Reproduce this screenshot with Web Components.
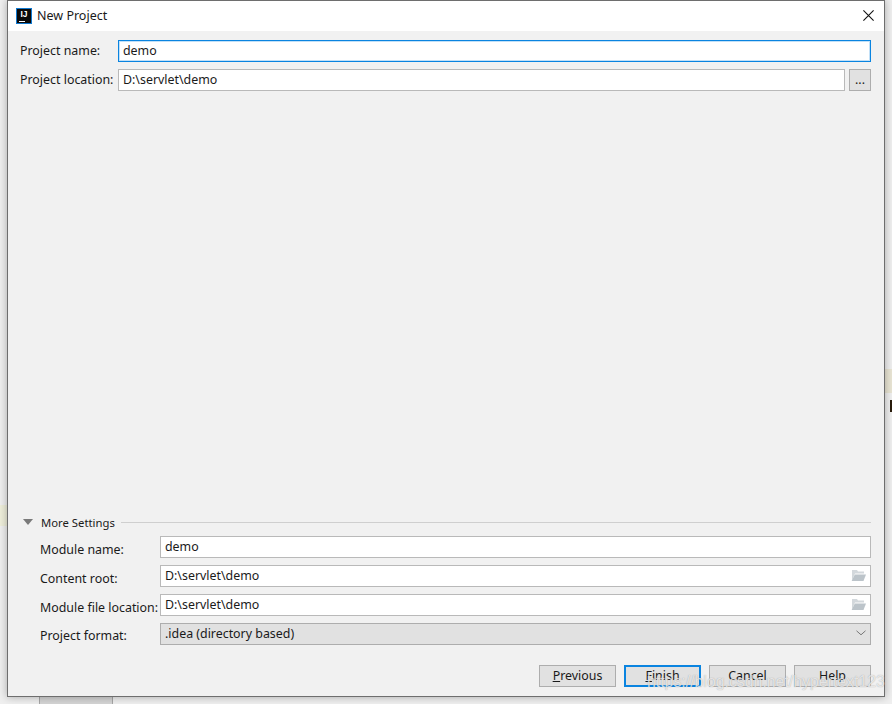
<!DOCTYPE html>
<html>
<head>
<meta charset="utf-8">
<title>New Project</title>
<style>
  html, body { margin: 0; height: 100%; }
  body {
    width: 892px;
    height: 704px;
    overflow: hidden;
    font: 12.4px "Noto Sans", "Open Sans", sans-serif;
    color: #1a1a1a;
  }
</style>
</head>
<body>
<template id="field-tpl">
  <style>
    :host { display: flex; align-items: center; height: 22px; }
    .label { flex: none; width: var(--label-width, 98px); white-space: nowrap; padding-top: var(--label-drop, 0); margin-top: -1px; }
    .box {
      flex: 1; min-width: 0; height: 22px; box-sizing: border-box;
      display: flex; align-items: center;
      background: #fff; border: 1px solid #b9b9b9; padding: 0 4px 1px;
      white-space: nowrap;
    }
    :host([focused]) .box { border-color: #0a84e0; box-shadow: inset 0 0 0 1px rgba(10,132,224,.25); }
    :host([readonly]) .box { background: #e1e1e1; border-color: #adadad; padding-bottom: 2px; }
    .value { flex: 1; }
    ::slotted(svg) { display: block; }
  </style>
  <span class="label"></span>
  <div class="box"><span class="value"></span><slot name="icon"></slot></div>
  <slot name="tail"></slot>
</template>

<template id="button-tpl">
  <style>
    :host {
      display: block; box-sizing: border-box; width: 77px; height: 22px;
      background: #e1e1e1; border: 1px solid #adadad;
      text-align: center; line-height: 20px; color: #1a1a1a;
    }
    :host([default]) { border: 2px solid #0a84e0; line-height: 18px; }
    u { text-underline-offset: 1px; }
  </style>
  <span id="t"></span>
</template>

<script>
  function fromTemplate(el, id) {
    el.attachShadow({ mode: 'open' });
    el.shadowRoot.appendChild(document.getElementById(id).content.cloneNode(true));
  }

  class FormField extends HTMLElement {
    constructor() {
      super();
      fromTemplate(this, 'field-tpl');
    }
    connectedCallback() {
      this.shadowRoot.querySelector('.label').textContent = this.getAttribute('label');
      this.shadowRoot.querySelector('.value').textContent = this.getAttribute('value');
    }
  }
  customElements.define('form-field', FormField);

  class DlgButton extends HTMLElement {
    constructor() {
      super();
      fromTemplate(this, 'button-tpl');
    }
    connectedCallback() {
      const text = this.getAttribute('text');
      const key = this.getAttribute('mnemonic');
      const t = this.shadowRoot.getElementById('t');
      if (key) {
        const u = document.createElement('u');
        u.textContent = key;
        t.append(u, text.slice(key.length));
      } else {
        t.textContent = text;
      }
    }
  }
  customElements.define('dlg-button', DlgButton);

  class FolderIcon extends HTMLElement {
    constructor() {
      super();
      this.attachShadow({ mode: 'open' });
      this.shadowRoot.innerHTML = `
        <style>:host { display: block; width: 15px; height: 13px; flex: none; }</style>
        <svg width="15" height="13" viewBox="0 0 15 13">
          <path d="M1 1h5l1 1.500h6V4.500H4L1 11.500z" fill="#d3d8dc"/>
          <path d="M3.800 5.500H15l-2.500 6.500H.6z" fill="#bcc4ca"/>
        </svg>`;
    }
  }
  customElements.define('folder-icon', FolderIcon);

  class TitleBar extends HTMLElement {
    constructor() {
      super();
      this.attachShadow({ mode: 'open' });
      this.shadowRoot.innerHTML = `
        <style>
          :host { display: flex; align-items: center; box-sizing: border-box; height: 30px; background: #fff; padding: 0 10px 1px 8px; flex: none; }
          .logo {
            position: relative; width: 14px; height: 14px; background: #0a0a0a; border: 1px solid #1079d0;
            margin-right: 5px; color: #fff; font: bold 8.500px/11px "Liberation Sans", sans-serif; text-align: center;
          }
          .logo::after { content: ""; position: absolute; left: 2px; bottom: 1px; width: 6px; height: 1px; background: #fff; }
          .title { flex: 1; font-size: 12.500px; }
          svg { display: block; }
        </style>
        <div class="logo">IJ</div>
        <span class="title"><slot></slot></span>
        <svg width="11" height="11" viewBox="0 0 11 11"><path d="M.4.4l10.200 10.200M10.600.4L.4 10.600" stroke="#111" stroke-width="1.100" fill="none"/></svg>`;
    }
  }
  customElements.define('title-bar', TitleBar);

  class MoreSettings extends HTMLElement {
    constructor() {
      super();
      this.attachShadow({ mode: 'open' });
      this.shadowRoot.innerHTML = `
        <style>
          :host { display: block; }
          .head { display: flex; align-items: center; height: 14px; margin-left: 3px; font-size: 11.300px; }
          .arrow { width: 0; height: 0; border: 5px solid transparent; border-top: 6px solid #7a7a7a; border-bottom: 0; margin-right: 8px; }
          .rule { flex: 1; height: 1px; background: #cfcfcf; margin-left: 6px; }
          .rows { display: flex; flex-direction: column; gap: 7px; margin: 7px 0 0 20px; --label-width: 120px; --label-drop: 6px; }
        </style>
        <div class="head"><span class="arrow"></span><span>More Settings</span><span class="rule"></span></div>
        <div class="rows"><slot></slot></div>`;
    }
  }
  customElements.define('more-settings', MoreSettings);

  class ProjectDialog extends HTMLElement {
    constructor() {
      super();
      this.attachShadow({ mode: 'open' });
      this.shadowRoot.innerHTML = `
        <style>
          :host {
            position: relative;
            display: flex; flex-direction: column; box-sizing: border-box;
            width: 878px; height: 697px; margin-left: 7px;
            background: #f1f1f1; border: 1px solid #6e6e6e;
            box-shadow: 0 0 8px rgba(0,0,0,.3);
          }
          .top { display: flex; flex-direction: column; gap: 7px; padding: 9px 13px 0 12px; }
          .grow { flex: 1; }
          .bottom { padding: 0 13px 0 12px; }
          .buttons { display: flex; justify-content: flex-end; gap: 8px; padding: 20px 13px 9px 0; }
        </style>
        <slot name="title"></slot>
        <div class="top"><slot name="top"></slot></div>
        <div class="grow"></div>
        <div class="bottom"><slot name="more"></slot></div>
        <div class="buttons"><slot name="buttons"></slot></div>`;
    }
  }
  customElements.define('project-dialog', ProjectDialog);

  // what shows of the IDE behind the dialog, plus the blog watermark on top
  class DesktopBack extends HTMLElement {
    constructor() {
      super();
      this.attachShadow({ mode: 'open' });
      this.shadowRoot.innerHTML = `
        <style>
          :host { display: block; position: relative; width: 892px; height: 704px; overflow: hidden; background: #efefef; }
          .patch { position: absolute; }
          .left { left: 0; top: 505px; width: 7px; height: 21px; background: #eeeeda; }
          .right { left: 885px; top: 369px; width: 7px; height: 24px; background: #e9e5d4; }
          .mark { left: 890px; top: 400px; width: 2px; height: 12px; background: #2a1c0c; }
          .tab { left: 39px; top: 697px; width: 72px; height: 7px; background: #d4d4d4; border: 1px solid #a6a6a6; border-width: 0 1px; }
          .watermark {
            position: absolute; left: 647px; top: 673px; white-space: nowrap;
            font: 15.850px "Liberation Sans", sans-serif; color: rgba(255,255,255,.72);
            text-shadow: 0 0 1px rgba(90,90,90,.55);
          }
        </style>
        <div class="patch left"></div>
        <div class="patch right"></div>
        <div class="patch mark"></div>
        <div class="patch tab"></div>
        <slot></slot>
        <div class="watermark">https://blog.csdn.net/hypertext123</div>`;
    }
  }
  customElements.define('desktop-back', DesktopBack);
</script>

<desktop-back>
  <project-dialog>
    <title-bar slot="title">New Project</title-bar>
    <form-field slot="top" label="Project name:" value="demo" focused></form-field>
    <form-field slot="top" label="Project location:" value="D:\servlet\demo">
      <dlg-button slot="tail" text="..." style="width:22px;margin-left:4px"></dlg-button>
    </form-field>
    <more-settings slot="more">
      <form-field label="Module name:" value="demo"></form-field>
      <form-field label="Content root:" value="D:\servlet\demo"><folder-icon slot="icon"></folder-icon></form-field>
      <form-field label="Module file location:" value="D:\servlet\demo"><folder-icon slot="icon"></folder-icon></form-field>
      <form-field label="Project format:" value=".idea (directory based)" readonly style="--label-drop:3px">
        <svg slot="icon" width="10" height="6" viewBox="0 0 10 6"><path d="M.5.8L5 4.800 9.500.8" stroke="#777" fill="none"/></svg>
      </form-field>
    </more-settings>
    <dlg-button slot="buttons" text="Previous" mnemonic="P"></dlg-button>
    <dlg-button slot="buttons" text="Finish" mnemonic="F" default></dlg-button>
    <dlg-button slot="buttons" text="Cancel"></dlg-button>
    <dlg-button slot="buttons" text="Help"></dlg-button>
  </project-dialog>
</desktop-back>
</body>
</html>
